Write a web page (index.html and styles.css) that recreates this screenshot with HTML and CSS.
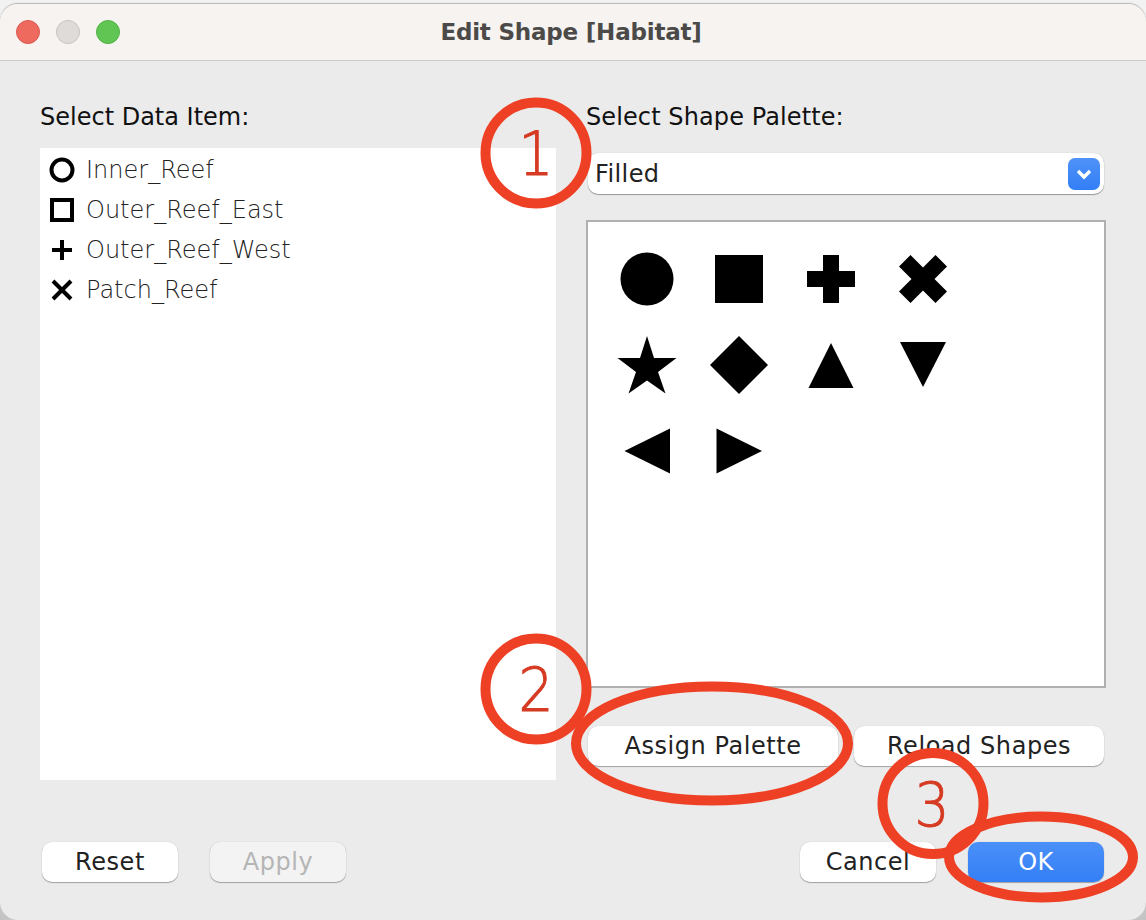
FILE: index.html
```html
<!DOCTYPE html>
<html lang="en">
<head>
    <meta charset="UTF-8" />
    <title>Edit Shape [Habitat]</title>
    <link rel="stylesheet" href="styles.css">
</head>
<body>
    <div class="window">
        <!-- Title bar -->
        <div class="titlebar">
            <div class="lights">
                <span class="light red"></span>
                <span class="light gray"></span>
                <span class="light green"></span>
            </div>
            <div class="title">Edit Shape [Habitat]</div>
        </div>

        <div class="content">
            <div class="columns">
                <!-- Data items -->
                <div class="col-left">
                    <div class="label">Select Data Item:</div>
                    <ul class="item-list">
                        <li>
                            <svg class="item-icon" viewBox="0 0 26 26"><circle cx="13" cy="13" r="10.5" fill="none" stroke="#000" stroke-width="4"/></svg>
                            Inner_Reef
                        </li>
                        <li>
                            <svg class="item-icon" viewBox="0 0 26 26"><rect x="3" y="3" width="20" height="20" fill="none" stroke="#000" stroke-width="4"/></svg>
                            Outer_Reef_East
                        </li>
                        <li>
                            <svg class="item-icon" viewBox="0 0 26 26"><path d="M3 13H23M13 3V23" fill="none" stroke="#000" stroke-width="4"/></svg>
                            Outer_Reef_West
                        </li>
                        <li>
                            <svg class="item-icon" viewBox="0 0 26 26"><path d="M4 4L22 22M22 4L4 22" fill="none" stroke="#000" stroke-width="4"/></svg>
                            Patch_Reef
                        </li>
                    </ul>
                </div>

                <!-- Shape palette -->
                <div class="col-right">
                    <div class="label">Select Shape Palette:</div>
                    <div class="dropdown">
                        <span>Filled</span>
                        <span class="dropdown-arrow">
                            <svg viewBox="0 0 32 32" width="32" height="32"><path d="M10 13L16 19L22 13" fill="none" stroke="#fff" stroke-width="3.4"/></svg>
                        </span>
                    </div>
                    <div class="palette">
                        <svg class="shape" viewBox="0 0 60 60"><ellipse cx="30" cy="30" rx="26.5" ry="26.5"/></svg>
                        <svg class="shape" viewBox="0 0 60 60"><rect x="6" y="6" width="48" height="48"/></svg>
                        <svg class="shape" viewBox="0 0 60 60"><path d="M22 6H38V22H54V38H38V54H22V38H6V22H22Z"/></svg>
                        <svg class="shape" viewBox="0 0 60 60"><path d="M17.500 6L30 18.500L42.500 6L54 17.500L41.500 30L54 42.500L42.500 54L30 41.500L17.500 54L6 42.500L18.500 30L6 17.500Z"/></svg>
                        <svg class="shape" viewBox="0 0 60 60"><path d="M30 1L37 23H59.500L41 37L48.500 58.500L30 45.500L11.500 58.500L19 37L.5 23H23Z"/></svg>
                        <svg class="shape" viewBox="0 0 60 60"><path d="M30 1L59 30L30 59L1 30Z"/></svg>
                        <svg class="shape" viewBox="0 0 60 60"><path d="M30 8L52.500 53H7.500Z"/></svg>
                        <svg class="shape" viewBox="0 0 60 60"><path d="M7 7H53L30 52Z"/></svg>
                        <svg class="shape" viewBox="0 0 60 60"><path d="M7.500 30L53 7.500V52.500Z"/></svg>
                        <svg class="shape" viewBox="0 0 60 60"><path d="M7.500 7.500L53 30L7.500 52.500Z"/></svg>
                    </div>
                    <div class="palette-buttons">
                        <button class="btn" type="button">Assign Palette</button>
                        <button class="btn" type="button">Reload Shapes</button>
                    </div>
                </div>
            </div>

            <!-- Bottom buttons -->
            <div class="footer">
                <div class="btn-group">
                    <button class="btn small" type="button">Reset</button>
                    <button class="btn small disabled" type="button">Apply</button>
                </div>
                <div class="btn-group">
                    <button class="btn small" type="button">Cancel</button>
                    <button class="btn small primary" type="button">OK</button>
                </div>
            </div>
        </div>

        <!-- Red annotations drawn over the dialog -->
        <svg class="annotations" viewBox="0 0 1146 920" width="1146" height="920">
            <g fill="none" stroke="#ee4024" stroke-width="10">
                <circle cx="536" cy="153" r="50.500"/>
                <circle cx="536" cy="689" r="50.500"/>
                <ellipse cx="712" cy="743.500" rx="136" ry="57"/>
                <circle cx="933" cy="803.500" r="50.500"/>
                <ellipse cx="1041" cy="857" rx="92" ry="40.500"/>
            </g>
            <g class="digits">
                <text x="536" y="175" textLength="35" lengthAdjust="spacingAndGlyphs">1</text>
                <text x="536" y="711" textLength="35" lengthAdjust="spacingAndGlyphs">2</text>
                <text x="932" y="826" textLength="35" lengthAdjust="spacingAndGlyphs">3</text>
            </g>
        </svg>
    </div>
</body>
</html>
```

FILE: styles.css
```css
/* General page */
html, body {
    margin: 0;
    padding: 0;
}

body {
    width: 1146px;
    height: 920px;
    overflow: hidden;
    background: linear-gradient(#f2f2f2, #f2f2f2 60%, #c4c4c4);
    font-family: 'DejaVu Sans', 'Liberation Sans', sans-serif;
}

.window {
    position: relative;
    height: 916px;
    margin-top: 4px;
    background-color: #ebebeb;
    border-radius: 18px;
    box-shadow: 0 -1px 1px #b4b4b4;
    overflow: hidden;
}

/* Title bar */
.titlebar {
    display: flex;
    align-items: center;
    justify-content: center;
    position: relative;
    height: 57px;
    padding-right: 4px;
    background-color: #f6f3f0;
    border-bottom: 1px solid #c9c9c9;
    box-sizing: border-box;
}

.lights {
    position: absolute;
    left: 16px;
    top: 16px;
    display: flex;
    gap: 16px;
}

.light {
    width: 24px;
    height: 24px;
    border-radius: 50%;
    box-sizing: border-box;
}

.red { background-color: #ee6a5f; border: 1px solid #d9584e; }
.gray { background-color: #dedbd8; border: 1px solid #c6c3c0; }
.green { background-color: #61c554; border: 1px solid #52b045; }

.title {
    font-size: 23px;
    font-weight: bold;
    color: #4b4a48;
    letter-spacing: -0.2px;
}

/* Main content */
.content {
    padding: 41px 40px 0;
}

.columns {
    display: flex;
    gap: 31px;
}

.col-left {
    width: 516px;
}

.col-right {
    width: 519px;
}

.label {
    height: 30px;
    font-size: 24px;
    line-height: 31px;
    color: #111;
    letter-spacing: 0;
    white-space: nowrap;
}

.col-right .label {
    margin-left: -1px;
    letter-spacing: 0.1px;
}

.item-list {
    list-style: none;
    height: 621px;
    margin: 16px 0 0;
    padding: 2px 0 9px;
    background-color: #fff;
    box-sizing: content-box;
}

.item-list li {
    display: flex;
    align-items: center;
    gap: 11px;
    height: 40px;
    padding-left: 9px;
    font-size: 24px;
    font-weight: 200;
    color: #222;
}

.item-icon {
    width: 26px;
    height: 26px;
}

/* Dropdown */
.dropdown {
    display: flex;
    align-items: center;
    justify-content: space-between;
    box-sizing: border-box;
    width: 516px;
    height: 41px;
    margin: 21px 0 0 1px;
    padding: 0 4px 0 7px;
    background-color: #fff;
    border-radius: 10px;
    box-shadow: 0 1px 1px rgba(0, 0, 0, 0.35), 0 0 1px rgba(0, 0, 0, 0.2);
    font-size: 24px;
    letter-spacing: 0.4px;
    color: #222;
}

.dropdown-arrow {
    display: block;
    width: 32px;
    height: 32px;
    border-radius: 7px;
    background: linear-gradient(#4f92f8, #337ff6);
}

/* Shapes */
.palette {
    display: grid;
    grid-template-columns: repeat(4, 92px);
    grid-auto-rows: 86px;
    align-content: start;
    box-sizing: border-box;
    width: 520px;
    height: 468px;
    margin: 26px 0 0 -1px;
    padding: 14px 0 0 13px;
    background-color: #fff;
    border: 2px solid #b0b0b0;
}

.shape {
    width: 60px;
    height: 60px;
    justify-self: center;
    align-self: center;
}

/* Buttons */
.palette-buttons {
    display: flex;
    gap: 16px;
    margin: 38px 0 0 1px;
}

.btn {
    width: 250px;
    height: 40px;
    padding: 0;
    background-color: #fff;
    border: none;
    border-radius: 10px;
    box-shadow: 0 1px 1px rgba(0, 0, 0, 0.3), 0 0 1px rgba(0, 0, 0, 0.2);
    font-family: inherit;
    font-size: 24px;
    color: #222;
    letter-spacing: 0.55px;
}

.btn.small {
    width: 136px;
}

.btn.disabled {
    background-color: #f3f3f3;
    color: #b5b5b5;
}

.btn.primary {
    background: linear-gradient(#4b90f8, #337ff6);
    color: #fff;
}

.footer {
    display: flex;
    justify-content: space-between;
    position: absolute;
    left: 42px;
    right: 42px;
    top: 838px;
}

.btn-group {
    display: flex;
    gap: 32px;
}

/* Annotations */
.annotations {
    position: absolute;
    left: 0;
    top: -4px;
    pointer-events: none;
}

.digits text {
    font-family: 'DejaVu Sans', sans-serif;
    font-size: 60px;
    font-weight: 200;
    fill: #d63a22;
    stroke: #d63a22;
    stroke-width: 1px;
    text-anchor: middle;
}
```
